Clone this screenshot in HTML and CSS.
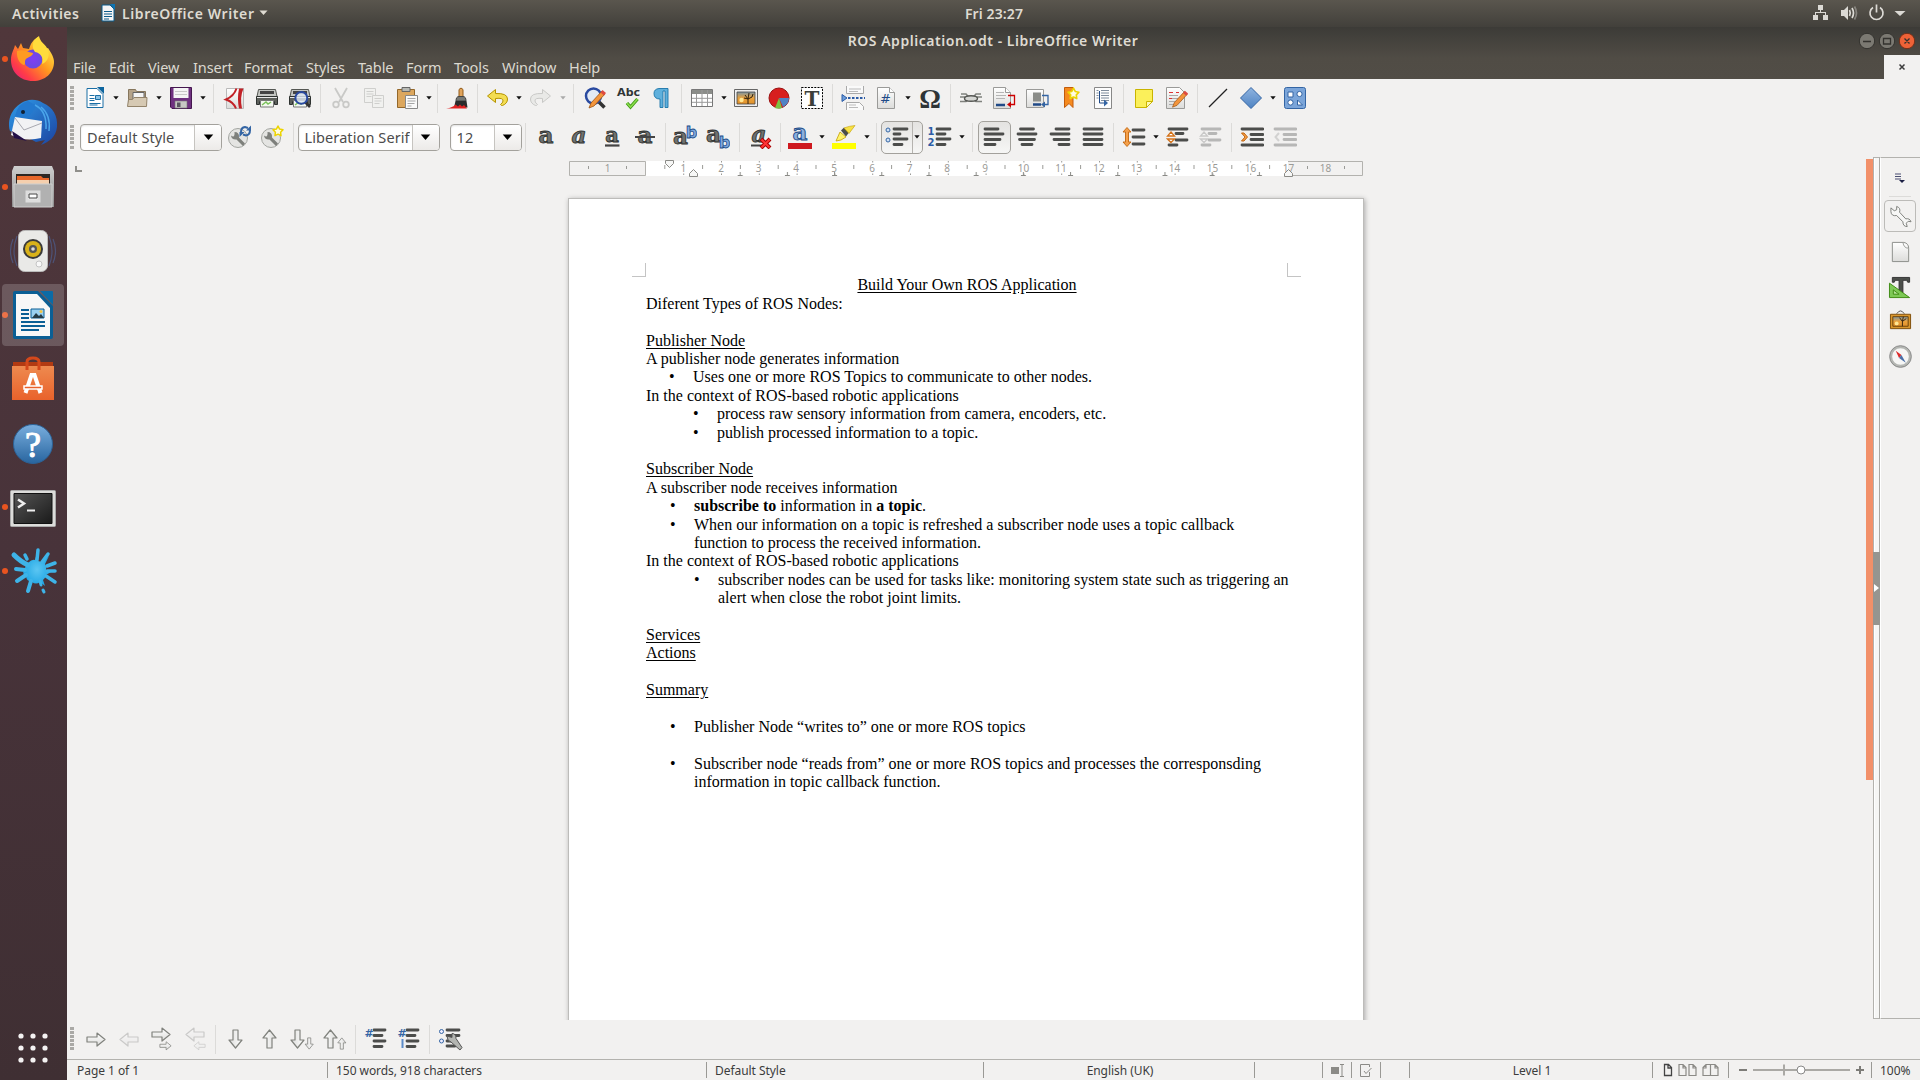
FILE: index.html
```html
<!DOCTYPE html>
<html lang="en">
<head>
<meta charset="utf-8">
<title>ROS Application.odt - LibreOffice Writer</title>
<link rel="stylesheet" href="styles.css">
</head>
<body>
<svg class="defs" width="0" height="0">
<defs>
<linearGradient id="gw" x2="0" y2="1"><stop stop-color="#fff"/><stop offset="1" stop-color="#dcdcda"/></linearGradient>
<linearGradient id="gb" x2="0" y2="1"><stop stop-color="#8fb4e0"/><stop offset="1" stop-color="#4f83c2"/></linearGradient>
<linearGradient id="gsun" x2="0" y2="1"><stop stop-color="#7d96a4"/><stop offset=".5" stop-color="#e9a13c"/><stop offset="1" stop-color="#e0912a"/></linearGradient>
<linearGradient id="gff" x1="1" y1="0" x2="0" y2="1"><stop offset=".1" stop-color="#fff04a"/><stop offset=".45" stop-color="#ff9a1f"/><stop offset=".75" stop-color="#ff3d47"/><stop offset="1" stop-color="#e21587"/></linearGradient>
<radialGradient id="gpur"><stop stop-color="#7f3df5"/><stop offset="1" stop-color="#6a4be0"/></radialGradient>
<linearGradient id="gtb" x2="1" y2="1"><stop stop-color="#2f9be8"/><stop offset="1" stop-color="#1c43a0"/></linearGradient>
<linearGradient id="gfile" x2="0" y2="1"><stop stop-color="#cfcfcf"/><stop offset="1" stop-color="#8e8e8e"/></linearGradient>
<linearGradient id="gor" x2="0" y2="1"><stop stop-color="#ee8a4f"/><stop offset="1" stop-color="#e9622b"/></linearGradient>
<linearGradient id="ghelp" x2="0" y2="1"><stop stop-color="#79aede"/><stop offset="1" stop-color="#28659f"/></linearGradient>
<linearGradient id="gterm" x2="1" y2="1"><stop stop-color="#555"/><stop offset="1" stop-color="#1a1a1a"/></linearGradient>
<radialGradient id="gsp"><stop stop-color="#5cc6f2"/><stop offset="1" stop-color="#1fa6e4"/></radialGradient>

<symbol id="caret" viewBox="0 0 6 4"><path d="M.3.3h5.4L3 3.4z" fill="currentColor"/></symbol>
<symbol id="new" viewBox="0 0 24 24"><path d="M4 2.500h10l6 6V21.500H4z" fill="#fff" stroke="#1a6ea5"/><path d="M14 1h7v7z" fill="#0d659f"/><path d="M6.500 9.500h5M6.500 12.500h5M6.500 14.500h5M6.500 17.500h11M6.500 19h8" stroke="#1a6ea5"/><path d="M12.500 9.500h5v4h-5z" fill="#8fc4e6" stroke="#1a6ea5"/></symbol>
<symbol id="open" viewBox="0 0 24 24"><path d="M2.500 20V3.500h7l1 2h9V20z" fill="#b5a389" stroke="#86765d"/><path d="M7 6.500h11v7H7z" fill="#f5f5f5" stroke="#666"/><path d="M1.500 20.500l1-7h4l1.500-2h13l-.5 9z" fill="#d6c9b3" stroke="#93836a"/></symbol>
<symbol id="save" viewBox="0 0 24 24"><path d="M1.500 1.500h21v21H3l-1.500-1.500z" fill="#6f3180" stroke="#45174f"/><path d="M4.500 2h15v10h-15z" fill="#f5f5f5"/><path d="M6 5.500h12M6 8.500h12" stroke="#c9c9c9"/><path d="M6 15h12v7H6z" fill="#c8c8c4" stroke="#777" stroke-width=".6"/><path d="M8 16.500h3.500v4.500H8z" fill="#5a5560"/></symbol>
<symbol id="pdf" viewBox="0 0 24 24"><path d="M4.500 2.500h17v20h-17z" fill="url(#gw)" stroke="#b9b9b9"/><path d="M17 2.500h4.500q-4 9-1.500 20h-3q-2-10 0-20z" fill="#c22126"/><path d="M14.500 2.500Q12 10 4 13.500Q11.500 16 14 22.500" stroke="#c22126" stroke-width="2" fill="none"/></symbol>
<symbol id="print" viewBox="0 0 24 24"><path d="M3.500 3.500h17l1.500 7H2z" fill="#c4c6c2" stroke="#555753"/><path d="M5 5h14v3H5z" fill="#444"/><path d="M1.500 10.500h21v8h-3v-3h-15v3h-3z" fill="#5d605b" stroke="#2e3230"/><path d="M2 11.500h20" stroke="#e8e8e8"/><path d="M5.500 14.500h13v6.500h-13z" fill="#f4f8f0" stroke="#777"/><path d="M7 19l4-3 2 2 3-2" stroke="#7ac15a" stroke-width="1.500" fill="none"/></symbol>
<symbol id="lens" viewBox="0 0 24 24"><path d="M15 15l6.500 6.500" stroke="#333" stroke-width="3.500"/><circle cx="10.500" cy="10" r="7.500" fill="#dfe9f5" fill-opacity=".8" stroke="#2a4aa0" stroke-width="2.500"/></symbol>
<symbol id="cut" viewBox="0 0 24 24"><g fill="none" stroke="#c9c9c7" stroke-width="1.800"><path d="M6 2l8 14M18 2l-8 14"/><circle cx="7" cy="18.500" r="2.800"/><circle cx="17" cy="18.500" r="2.800"/></g></symbol>
<symbol id="copy" viewBox="0 0 24 24"><g fill="#f1f1ef" stroke="#cfcfcd"><path d="M2.500 2.500h11v14h-11z"/><path d="M10.500 9.500h11v12h-11z"/><path d="M4.500 5.500h7M4.500 8h7M4.500 10.500h5M12.500 12.500h7M12.500 15h7M12.500 17.500h5"/></g></symbol>
<symbol id="paste" viewBox="0 0 24 24"><path d="M2.500 3.500h17v18h-17z" fill="#dca75e" stroke="#93672a"/><path d="M7 1.500h8v4H7z" fill="#b7b9b4" stroke="#666"/><path d="M10.500 9.500h12v13h-12z" fill="#fafafa" stroke="#888"/><path d="M12.500 12.500h8M12.500 15h8M12.500 17.500h7M12.500 20h4" stroke="#a5a5a5"/></symbol>
<symbol id="brush" viewBox="0 0 24 24"><path d="M13 11V3.500q2-3 4 0V11z" fill="#e0a35a" stroke="#935d1c"/><path d="M10 15q0-4.500 3-4.500h4q3 0 3 4.500z" fill="#777975" stroke="#444"/><path d="M9.500 15h11l1 6.500H8z" fill="#2b2b2b"/><path d="M0 22.500q7-1 9.500-4l2.500 2 2-2 2 2 2-1.500 3 3.500z" fill="#df2222"/></symbol>
<symbol id="undo" viewBox="0 0 24 24"><path d="M9.500 3.500L1.500 10l8 6.500v-4q8-1 7.500 2.500-.3 2-2.500 3.500 1 1.500 2 1 5-2 5-6.500 0-6-12-5.500z" fill="currentColor" stroke="var(--edge)" stroke-linejoin="round"/></symbol>
<symbol id="pencil" viewBox="0 0 24 24"><path d="M6 22l2-5L19 5l3 3-11 12z" fill="#f3953c" stroke="#9d5415" stroke-width=".8"/><path d="M17.500 6.500l2-2.500 3.500 3-2 2.500z" fill="#dd4a42"/></symbol>
<symbol id="abc" viewBox="0 0 24 24"><text x="1" y="9.500" class="g-abc" textLength="23" lengthAdjust="spacingAndGlyphs">Abc</text><path d="M11 17l3.500 4 7-8" fill="none" stroke="#3f9b15" stroke-width="3.400"/><path d="M11 17l3.500 4 7-8" fill="none" stroke="#8bdd4c" stroke-width="1.500"/></symbol>
<symbol id="pil" viewBox="0 0 24 24"><path d="M10 2.500h9v19h-3V5h-2v16.500h-3V13Q5 13 5 7.500 5 3 10 2.500z" fill="#5fb0dc" stroke="#1b75a8" stroke-width=".9"/></symbol>
<symbol id="table" viewBox="0 0 24 24"><path d="M1.500 3.500h21v17h-21z" fill="#fff" stroke="#777"/><path d="M2 4h20v4H2z" fill="#8b8d89"/><path d="M2 12.300h20M2 16.300h20M6.500 8v12M12 4v16M17.500 4v16" stroke="#999"/></symbol>
<symbol id="image" viewBox="0 0 24 24"><path d="M.5 3.500h23v17H.5z" fill="#eee" stroke="#666"/><path d="M3 6h18v12H3z" fill="url(#gsun)" stroke="#444" stroke-width=".8"/><circle cx="7.500" cy="14" r="2.200" fill="#ffe793"/><path d="M14 18v-5l-3-4M14 13l1-6M14 13l4-2 1-3M14 13l-4-1" stroke="#33230f" fill="none"/></symbol>
<symbol id="chart" viewBox="0 0 24 24"><circle cx="12" cy="12" r="10" fill="#d71e1e" stroke="#9a1010"/><path d="M12 12h10a10 10 0 0 1-6 9z" fill="#4f82c4"/><path d="M12 12l3 10q-4 1-7 0z" fill="#7cc142"/></symbol>
<symbol id="tbox" viewBox="0 0 24 24"><path d="M1.500 1.500h21v21h-21z" fill="#fff" stroke="#000" stroke-dasharray="2 1.200"/><text x="12" y="19.500" class="g-t">T</text></symbol>
<symbol id="pbreak" viewBox="0 0 24 24"><path d="M5.500 0v7.500h17V0M5.500 24v-7.500h13l4 4V24" fill="#fafafa" stroke="#a9a9a9"/><path d="M8 3h12M8 5.500h9M8 19h7M8 21.500h9" stroke="#bbb"/><path d="M7 12h17" stroke="#2c5ca6" stroke-width="2" stroke-dasharray="2.500 1.500"/><path d="M1 8.500l5 3.500-5 3.500z" fill="#6b9cda" stroke="#2c5ca6"/></symbol>
<symbol id="field" viewBox="0 0 24 24"><path d="M3.500 1.500h12l5 5v16h-17z" fill="url(#gw)" stroke="#9a9a98"/><path d="M15.500 1.500v5h5" fill="#fff" stroke="#9a9a98"/><text x="11.500" y="17" class="g-hash">#</text></symbol>
<symbol id="omega" viewBox="0 0 24 24"><text x="12" y="22" class="g-om">Ω</text></symbol>
<symbol id="link" viewBox="0 0 24 24"><g fill="none" stroke="#80827e" stroke-width="1.700"><path d="M2 8h5l3 3.500M1 11h5M1 15.500h6l3-3M22 8h-5l-3 3.500M23 11h-5M23 15.500h-6l-3-3"/></g><ellipse cx="12" cy="12.500" rx="6.500" ry="2.800" fill="#d5d6d3" stroke="#555753" stroke-width="1.400"/></symbol>
<symbol id="fnote" viewBox="0 0 24 24"><path d="M1.500 1.500h12l5 5v16h-17z" fill="url(#gw)" stroke="#9a9a98"/><path d="M13.500 1.500v5h5" fill="#fff" stroke="#9a9a98"/><path d="M4 6.500h8M4 9.500h10M4 12.500h9" stroke="#b5b5b5"/><path d="M4 19h9" stroke="#204a87" stroke-width="2.500"/><path d="M16 9.500h6.500v9H18" fill="none" stroke="#c00" stroke-width="1.300"/><path d="M19 15.500v6l-4-3z" fill="#c00"/></symbol>
<symbol id="enote" viewBox="0 0 24 24"><path d="M1.500 3.500h17v18h-17z" fill="url(#gw)" stroke="#9a9a98"/><path d="M8 6.500h8v9H8z" fill="#8b8d89"/><path d="M8 18.500h8" stroke="#204a87" stroke-width="2.500"/><path d="M17 9.500h6v9h-4" fill="none" stroke="#3465a4" stroke-width="1.300"/><path d="M20 15.500v6l-4-3z" fill="#3465a4"/></symbol>
<symbol id="star" viewBox="0 0 12 12"><path d="M6 1l1.600 3.100 3.400.7-2.400 2.500.4 3.400-3-1.500-3 1.500.4-3.400L1 4.800l3.400-.7z" fill="#fffce0" stroke="#edd400" stroke-width="1.500" stroke-linejoin="round"/></symbol>
<symbol id="bm" viewBox="0 0 24 24"><path d="M5.500 1.500h8.500v20l-4-4-4.500 4z" fill="#f58a1f" stroke="#c25b0b"/><use href="#star" x="8" y="1" width="13" height="13"/></symbol>
<symbol id="xref" viewBox="0 0 24 24"><path d="M3.500 1.500h17v21h-17z" fill="#fdfdfd" stroke="#888"/><path d="M5.500 4.500h2M5.500 7h2M5.500 9.500h2M5.500 12h2M10 4.500h8M10 7h8M10 9.500h8M10 12h8M10 14.500h8" stroke="#7f8c9c"/><path d="M8.500 5v12h6" stroke="#204a87" fill="none"/><path d="M13 13.500l4 3.500-4 3.500z" fill="#3465a4"/></symbol>
<symbol id="note" viewBox="0 0 24 24"><path d="M3.500 3.500h17v12l-6 6h-11z" fill="#fbf05a" stroke="#c9b400"/><path d="M20.500 15.500h-6v6z" fill="#fdf9b4" stroke="#c9b400"/></symbol>
<symbol id="track" viewBox="0 0 24 24"><path d="M1.500 1.500h13l5 5v16h-18z" fill="url(#gw)" stroke="#9a9a98"/><path d="M4 9.500h9M4 12.500h9M4 15.500h6M4 18.500h5" stroke="#aaa"/><path d="M4 6.500h4m3 0h3M4 12.500h3" stroke="#d33"/><use href="#pencil" x="2" y="1" width="22" height="22"/></symbol>
<symbol id="line" viewBox="0 0 24 24"><path d="M3 21L21 3" stroke="#222" stroke-width="1.300"/></symbol>
<symbol id="dia" viewBox="0 0 24 24"><path d="M12 1.500L22.500 12 12 22.500 1.500 12z" fill="url(#gb)" stroke="#3465a4"/></symbol>
<symbol id="shapes" viewBox="0 0 24 24"><rect x="1.500" y="1.500" width="21" height="21" rx="2" fill="#7ba5d9" stroke="#3465a4"/><g fill="#fff" stroke="#3465a4"><path d="M5 6h5v5H5zM14.500 14v5h5z"/><circle cx="16.500" cy="8" r="2.600"/><circle cx="7.500" cy="16.500" r="2.600"/></g></symbol>
<symbol id="wrenchc" viewBox="0 0 24 24"><circle cx="11" cy="13" r="9.500" fill="#e4e4e2" stroke="#a3a5a1"/><path d="M4 10.500q4 3 3.500-3.500 5 0 4.500 5.500l6 6-2 2.500-6.500-6.500q-5 .5-5.500-4z" fill="#7e807c"/></symbol>
<symbol id="ustyle" viewBox="0 0 24 24"><use href="#wrenchc" width="24" height="24"/><path d="M14 7q0-4.500 4-5l3 1M23 5q0 5-4 5.500l-3-1" fill="none" stroke="#3465a4" stroke-width="2"/><path d="M19 5.500h5V.5zM17.500 7h-5v5z" fill="#3465a4"/></symbol>
<symbol id="nstyle" viewBox="0 0 24 24"><use href="#wrenchc" width="24" height="24"/><use href="#star" x="12" y="0" width="12" height="12"/></symbol>
<symbol id="ab" viewBox="0 0 24 24"><text x="12" y="18" class="g-a">a</text></symbol>
<symbol id="ai" viewBox="0 0 24 24"><text x="12" y="18" class="g-a it">a</text></symbol>
<symbol id="au" viewBox="0 0 24 24"><text x="12" y="17" class="g-a sm">a</text><path d="M5 20.500h14.500" stroke="#444" stroke-width="2.200"/></symbol>
<symbol id="as" viewBox="0 0 24 24"><text x="12" y="18" class="g-a">a</text><path d="M2 12h20" stroke="#444" stroke-width="2"/></symbol>
<symbol id="sup" viewBox="0 0 24 24"><text x="7.500" y="18.500" class="g-a">a</text><text x="18.500" y="13" class="g-b">b</text></symbol>
<symbol id="sub" viewBox="0 0 24 24"><text x="7.500" y="17" class="g-a">a</text><text x="18.500" y="22.500" class="g-b">b</text></symbol>
<symbol id="clr" viewBox="0 0 24 24"><text x="11" y="17" class="g-a it">a</text><path d="M3 20.500h12" stroke="#444" stroke-width="2"/><path d="M13 14l9 9M22 14l-9 9" stroke="#a00" stroke-width="4"/><path d="M13.500 14.500l8 8M21.500 14.500l-8 8" stroke="#f33" stroke-width="2"/></symbol>
<symbol id="fcol" viewBox="0 0 24 24"><text x="12" y="15" class="g-a bl">a</text><path d="M0 18h24v6H0z" fill="#ce181e"/></symbol>
<symbol id="hi" viewBox="0 0 24 24"><path d="M4 16l4-9 6 5-5 3z" fill="#fff36b" stroke="#c4a000" stroke-width=".8"/><path d="M9 5.500l3-3 5 5-3 4z" fill="#4a4c48"/><path d="M12 3Q17 1 23 .500l-6 8z" fill="#f7e145" stroke="#c4a000" stroke-width=".6"/><path d="M0 18h24v6H0z" fill="#ff0"/></symbol>
<symbol id="al" viewBox="0 0 24 24"><path d="M3 4h13M3 9h18M3 14.500h15M3 19.500h10" class="tl"/></symbol>
<symbol id="ac" viewBox="0 0 24 24"><path d="M5.500 4h13M3 9h18M4.500 14.500h15M7 19.500h10" class="tl"/></symbol>
<symbol id="ar" viewBox="0 0 24 24"><path d="M8 4h13M3 9h18M6 14.500h15M11 19.500h10" class="tl"/></symbol>
<symbol id="aj" viewBox="0 0 24 24"><path d="M3 4h18M3 9h18M3 14.500h18M3 19.500h18" class="tl"/></symbol>
<symbol id="bul" viewBox="0 0 24 24"><path d="M9 4h13M9 9h6M9 14h13M9 19.500h8" class="tl"/><circle cx="3" cy="5" r="2" fill="#cfe0f4" stroke="#3465a4"/><circle cx="3" cy="15" r="2" fill="#cfe0f4" stroke="#3465a4"/></symbol>
<symbol id="num" viewBox="0 0 24 24"><path d="M9 4h13M9 9h8M9 14h13M9 19.500h8" class="tl"/><text x="3" y="10" class="g-n">1</text><text x="3" y="21" class="g-n">2</text></symbol>
<symbol id="lsp" viewBox="0 0 24 24"><path d="M11 5h11M11 12h11M11 19h11" class="tl"/><path d="M5 2.500l4 4.500H6.500v10H9L5 21.500 1 17h2.500V7H1z" fill="#f5a04a" stroke="#c2650f" stroke-width=".9"/></symbol>
<symbol id="psp" viewBox="0 0 24 24"><path d="M3 4h18M10 8.500h7M10 15h11M3 20h8" class="tl"/><path d="M5 7l3.500 4h-7zM5 17.500L8.500 14h-7z" fill="#fff" stroke="#d3721a" stroke-width="1.300"/></symbol>
<symbol id="ind" viewBox="0 0 24 24"><path d="M2 4h21M11 9.500h12M11 14.500h12M2 20h21" class="tl"/><path d="M1.500 8l3.500 4-3.500 4h2.500l3.500-4L4 8z" fill="#f5a04a" stroke="#c2650f"/></symbol>
<symbol id="outd" viewBox="0 0 24 24"><path d="M2 4h21M11 9.500h12M11 14.500h12M2 20h21" class="tl"/><path d="M6 8l-3.500 4L6 16" fill="none" stroke="#999" stroke-width="2"/></symbol>

<symbol id="r" viewBox="0 0 24 24"><path d="M3 10h10V6l8 6.500-8 6.500v-4H3z" fill="url(#gw)" stroke="#80827d" stroke-width="1.200" stroke-linejoin="round"/></symbol>
<symbol id="wrench" viewBox="0 0 24 24"><path d="M2 3l3.500 3L8 5V1.500q4.500 1.500 3 6l6.500 7q4-1 5.500 3l-3-.5-2 2 1 3.500q-4.500 0-4.500-5L8 11q-5.500 1-6-4z" fill="#f7f7f6" stroke="#7c7e7a"/></symbol>
<symbol id="nb" viewBox="0 0 24 24"><path d="M10 3h11M10 8.500h8M10 14h11M10 19.500h8" class="tl"/><text x="5" y="10" class="g-h2">#</text></symbol>
<symbol id="nb2" viewBox="0 0 24 24"><path d="M10 3h11M10 8.500h8M10 14h11M10 19.500h8" class="tl"/><text x="5" y="10" class="g-h2">#</text><path d="M5.500 12v9" stroke="#5b8bc8" stroke-width="2"/></symbol>
<symbol id="bw" viewBox="0 0 24 24"><path d="M8 3h12M8 8.500h12M8 14h8M8 19h8" class="tl"/><circle cx="2.500" cy="4.500" r="2" fill="#eef" stroke="#3465a4"/><circle cx="2.500" cy="14" r="2" fill="#eef" stroke="#3465a4"/><path d="M8 9q0 5 4 6l9 8 2-2.500-6-9q0-5-4-5v4z" fill="#b4b6b2" stroke="#555"/></symbol>
</defs></svg>

<header class="topbar">
  <span class="act">Activities</span>
  <svg class="appicon" viewBox="0 0 14 18"><path d="M1 1h8l4 4v12H1z" fill="#f5f5f5" stroke="#0b5c8c"/><path d="M9 0h5v6z" fill="#0d75b3"/><path d="M3 7.500h8M3 10h8M3 12.500h8M3 15h5" stroke="#0b5c8c" stroke-width="1.200"/></svg>
  <span class="appname">LibreOffice Writer</span>
  <svg class="tcaret" viewBox="0 0 6 4"><use href="#caret"/></svg>
  <span class="clock">Fri 23:27</span>
  <svg class="tray" viewBox="0 0 92 20"><g fill="#dcdad5"><path d="M8 2h5v5H8zM3 12h5v5H3zM13 12h5v5h-5z"/><path d="M10 6h1v3h5v3h-1v-2H6v2H5V9h5z"/><path d="M31 7h3l4-4v14l-4-4h-3z"/></g><g fill="none" stroke="#dcdad5" stroke-width="1.700"><path d="M39.500 7q1.500 3 0 6M42 5q3 5 0 10"/><path d="M44.500 3.500q4 6.500 0 13" opacity=".4"/><path d="M63 4.500a6.500 6.500 0 1 0 7 0M66.500 1.500v8"/></g><path d="M84.500 8h11l-5.500 5z" fill="#dcdad5"/></svg>
</header>

<div class="desktop">
<nav class="dock">
  <div class="app run"><svg viewBox="0 0 48 48"><path d="M24 46C11 46 2 37 2 25c0-7 3-10 4-15l3 4 3-6 2 5 6 1c2-6 4-9 9-12 1 7 5 7 7 12l3-1c4 6 6 10 6 14 0 11-9 19-21 19z" fill="url(#gff)"/><circle cx="24" cy="24" r="9.500" fill="url(#gpur)"/><path d="M8 16c6-2 10 1 16 2 0 3-5 4-7 6s0 6-2 6-8-5-7-14z" fill="#ff9b22"/><path d="M30 1c-8 5-7 12-4 16 6 1 9 6 7 12 6-2 9-10 5-16-2-4-7-6-8-12z" fill="#ffdc3c"/></svg></div>
  <div class="app"><svg viewBox="0 0 48 48"><path d="M1 32C-3 18 6 4 20 1q8-1 14 3c10 4 15 13 14 24-1 10-8 15-16 18l4-5-9 2-13-7z" fill="url(#gtb)"/><path d="M6 17Q9 4 19 2l9 5-11 14z" fill="#2379cf"/><path d="M26 6q12 6 11 24M32 8q10 8 8 24" stroke="#4aa5ea" fill="none" stroke-width="1.500"/><path d="M2 36l4-18 27 4-1 17q-16 4-30-3z" fill="#f2f2f4"/><path d="M6 19l9 12 18-7" fill="none" stroke="#a8a8b0"/><path d="M3 32l15 10-13-3z" fill="#241047"/><circle cx="14" cy="13" r="2" fill="#123"/></svg></div>
  <div class="app run"><svg viewBox="0 0 48 48"><path d="M5 3h38l2 5v36H3V8z" fill="url(#gfile)"/><path d="M7 11h34v12H7z" fill="#2e2622"/><path d="M8 13h24l2 2h6v6H8z" fill="#e8672a"/><path d="M8 17h32v4H8z" fill="#f4cfae"/><path d="M5 21h38v23H5z" fill="#b1b1b1" stroke="#cfcfcf"/><path d="M18 29h12v9H18z" fill="#eee" stroke="#ddd" stroke-width="3"/><path d="M20 31h8v4h-8z" fill="#fff" stroke="#444"/></svg></div>
  <div class="app"><svg viewBox="0 0 48 48"><g fill="none" stroke="#4d5a86" stroke-width="1.200" opacity=".8"><path d="M4 12q-5 12 0 24M8 9q-6 15 0 30M44 12q5 12 0 24M40 9q6 15 0 30"/></g><rect x="9.500" y="3.500" width="29" height="41" rx="6" fill="#e9e9e7" stroke="#bbb"/><circle cx="24" cy="22" r="10" fill="#3a3a3a"/><circle cx="24" cy="22" r="8" fill="#d9b21a"/><circle cx="24" cy="22" r="4" fill="#555"/><circle cx="24" cy="22" r="1.800" fill="#ddd"/><circle cx="30" cy="37" r="3" fill="#f8f8f8" stroke="#c4c4c4"/></svg></div>
  <div class="app run on"><svg viewBox="0 0 48 48"><path d="M4 2q0-2 2-2h23l15 15v31q0 2-2 2H6q-2 0-2-2z" fill="#0a5f95"/><path d="M7 3h21l13 14v28H7z" fill="#f7f7f7"/><path d="M31 0h12q1 0 1 1v13z" fill="#0b6ba6"/><path d="M12 19h8M12 23h8M12 27h8M12 31h24M12 35h24M12 39h18" stroke="#0a5f95" stroke-width="2"/><path d="M22 18h13v9H22z" fill="#9ad0f0" stroke="#0a5f95"/><path d="M23 27l4-5 3 3 2-2 3 4z" fill="#253b46"/><circle cx="32" cy="20.500" r="1.500" fill="#f5c542"/></svg></div>
  <div class="app"><svg viewBox="0 0 48 48"><path d="M4 7h40v8H4z" fill="#b23a12"/><path d="M3 11h42v34H3z" fill="url(#gor)"/><path d="M18 15V7q0-4 6-4t6 4v8" fill="none" stroke="#d4481b" stroke-width="3"/><path d="M16.500 38l6-18h3l6 18" fill="none" stroke="#fff" stroke-width="4"/><path d="M15 31h18v3H15z" fill="#e9622b" stroke="#fff" stroke-width="1.500"/></svg></div>
  <div class="app"><svg viewBox="0 0 48 48"><circle cx="24" cy="25" r="19.500" fill="url(#ghelp)" stroke="#2c6296"/><text x="24" y="38" class="g-q">?</text></svg></div>
  <div class="app run"><svg viewBox="0 0 48 48"><rect x="1.500" y="7.500" width="45" height="36" rx="1" fill="#dcdcda" stroke="#aaa"/><path d="M5 10.500h38v30H5z" fill="url(#gterm)" stroke="#111"/><path d="M9 16.500l6 4-6 4" fill="none" stroke="#eee" stroke-width="2.500"/><path d="M18 27.500h8" stroke="#eee" stroke-width="2"/></svg></div>
  <div class="app run"><svg viewBox="0 0 48 48"><path d="M19 16q4-4 7-3l2-7 1 8 4 1 7-6-4 8q2 3 1 6l5 2-5 3q-1 4-3 5l2 6-5-4q-4 3-8 0-6-1-6-6l-3-3 2-4q0-4 3-6z" fill="url(#gsp)"/><g stroke="#3eb4e8" stroke-linecap="round" fill="none"><path d="M19 18Q12 15 5 8" stroke-width="5"/><path d="M28 13l1-10M33 15l6-8M38 19l8-3M38 24h8M37 29l9 6M18 12l-2-4" stroke-width="3.500"/><path d="M22 34l-3 10M17 28l-9 6M16 23l-9-1" stroke-width="4"/><path d="M31 34l1 4M34 43l1 2" stroke-width="3"/></g></svg></div>
  <svg class="grid9" viewBox="0 0 32 32"><g fill="#f4f2f2"><circle cx="4" cy="4" r="2.600"/><circle cx="16" cy="4" r="2.600"/><circle cx="28" cy="4" r="2.600"/><circle cx="4" cy="16" r="2.600"/><circle cx="16" cy="16" r="2.600"/><circle cx="28" cy="16" r="2.600"/><circle cx="4" cy="28" r="2.600"/><circle cx="16" cy="28" r="2.600"/><circle cx="28" cy="28" r="2.600"/></g></svg>
</nav>

<main class="window">
  <div class="head">
    <div class="titlebar"><span class="title">ROS Application.odt - LibreOffice Writer</span>
      <svg class="wbtns" viewBox="0 0 60 20"><circle cx="10" cy="10" r="7.700" fill="#7b7972" stroke="#33322e"/><circle cx="30" cy="10" r="7.700" fill="#7b7972" stroke="#33322e"/><circle cx="50" cy="10" r="7.700" fill="#ee6237" stroke="#6f2f19"/><path d="M6 10.500h8M26.500 7.500h7v5.500h-7zM47.500 7.500l5 5M52.500 7.500l-5 5" stroke="#33322e" fill="none" stroke-width="1.300"/></svg>
    </div>
    <div class="menubar">
      <div class="menus"><span>File</span><span>Edit</span><span>View</span><span>Insert</span><span>Format</span><span>Styles</span><span>Table</span><span>Form</span><span>Tools</span><span>Window</span><span>Help</span></div>
      <div class="closedoc"><svg width="8" height="8" viewBox="0 0 8 8"><path d="M1.500 1.500l5 5M6.500 1.500l-5 5" stroke="#3c3c3c" stroke-width="1.500"/></svg></div>
    </div>
  </div>

  <div class="tools t1">
    <i class="grip"></i>
    <b><svg><use href="#new"/></svg></b><u class="w10"><svg><use href="#caret"/></svg></u>
    <b><svg><use href="#open"/></svg></b><u class="w10"><svg><use href="#caret"/></svg></u>
    <b><svg><use href="#save"/></svg></b><u class="w12"><svg><use href="#caret"/></svg></u><s class="w8"></s>
    <b><svg><use href="#pdf"/></svg></b><b><svg><use href="#print"/></svg></b><b><svg viewBox="0 0 24 24"><use href="#print"/><use href="#lens" x="5" y="4" width="19" height="19"/></svg></b><s class="w8"></s>
    <b><svg><use href="#cut"/></svg></b><b><svg><use href="#copy"/></svg></b><b><svg><use href="#paste"/></svg></b><u class="w11"><svg><use href="#caret"/></svg></u><s class="w7"></s>
    <b><svg><use href="#brush"/></svg></b><s class="w7"></s>
    <b class="y"><svg><use href="#undo"/></svg></b><u class="w10"><svg><use href="#caret"/></svg></u>
    <b class="redo"><svg><use href="#undo"/></svg></b><u class="w11 off"><svg><use href="#caret"/></svg></u><s class="w10"></s>
    <b><svg viewBox="0 0 24 24"><use href="#lens"/><use href="#pencil"/></svg></b><b><svg><use href="#abc"/></svg></b><b><svg><use href="#pil"/></svg></b><s class="w8"></s>
    <b><svg><use href="#table"/></svg></b><u class="w11"><svg><use href="#caret"/></svg></u>
    <b><svg><use href="#image"/></svg></b><b><svg><use href="#chart"/></svg></b><b><svg><use href="#tbox"/></svg></b><s class="w8"></s>
    <b><svg><use href="#pbreak"/></svg></b><b><svg><use href="#field"/></svg></b><u class="w11"><svg><use href="#caret"/></svg></u>
    <b><svg><use href="#omega"/></svg></b><s class="w8"></s>
    <b><svg><use href="#link"/></svg></b><b><svg><use href="#fnote"/></svg></b><b><svg><use href="#enote"/></svg></b><b><svg class="nudge"><use href="#bm"/></svg></b><b><svg><use href="#xref"/></svg></b><s class="w8"></s>
    <b><svg><use href="#note"/></svg></b><b><svg><use href="#track"/></svg></b><s class="w8"></s>
    <b><svg><use href="#line"/></svg></b><b><svg><use href="#dia"/></svg></b><u class="w11"><svg><use href="#caret"/></svg></u>
    <b><svg><use href="#shapes"/></svg></b>
  </div>

  <div class="tools t2">
    <i class="grip"></i>
    <div class="combo c1"><span>Default Style</span><em><svg><use href="#caret"/></svg></em></div>
    <b><svg><use href="#ustyle"/></svg></b><b><svg><use href="#nstyle"/></svg></b><s class="w9"></s>
    <div class="combo c2"><span>Liberation Serif</span><em><svg><use href="#caret"/></svg></em></div>
    <div class="combo c3"><span>12</span><em><svg><use href="#caret"/></svg></em></div><s class="w8"></s>
    <b><svg><use href="#ab"/></svg></b><b><svg><use href="#ai"/></svg></b><b><svg><use href="#au"/></svg></b><b><svg><use href="#as"/></svg></b><s class="w7"></s>
    <b><svg><use href="#sup"/></svg></b><b><svg><use href="#sub"/></svg></b><s class="w9"></s>
    <b><svg><use href="#clr"/></svg></b><s class="w7"></s>
    <b><svg><use href="#fcol"/></svg></b><u class="w11"><svg><use href="#caret"/></svg></u>
    <b><svg><use href="#hi"/></svg></b><u class="w12"><svg><use href="#caret"/></svg></u><s class="w8"></s>
    <div class="split"><b><svg><use href="#bul"/></svg></b><u><svg><use href="#caret"/></svg></u></div>
    <b class="numb"><svg><use href="#num"/></svg></b><u class="w11"><svg><use href="#caret"/></svg></u><s class="w10"></s>
    <b class="press"><svg><use href="#al"/></svg></b><b><svg><use href="#ac"/></svg></b><b><svg><use href="#ar"/></svg></b><b><svg><use href="#aj"/></svg></b><s class="w8"></s>
    <b><svg><use href="#lsp"/></svg></b><u class="w11"><svg><use href="#caret"/></svg></u>
    <b><svg><use href="#psp"/></svg></b><b class="dis"><svg><use href="#psp"/></svg></b><s class="w8"></s>
    <b><svg><use href="#ind"/></svg></b><b class="dis"><svg><use href="#outd"/></svg></b>
  </div>

  <div class="work">
    <div class="canvas">
      <i class="corner"></i>
      <svg class="ruler" viewBox="568 158 798 20" width="798" height="20">
        <defs><pattern id="tk" x="664.3" y="158" width="37.800" height="20" patternUnits="userSpaceOnUse"><path d="M.5 7v4" stroke="#9a9a96"/><path d="M19.400 3v1.500M19.400 15.500V17" stroke="#9a9a96"/></pattern>
        <pattern id="tb" x="737.700" y="158" width="47.200" height="20" patternUnits="userSpaceOnUse"><path d="M0 17.500h5M2.500 14v4" stroke="#8a8a86" fill="none"/></pattern></defs>
        <path d="M569.500 161.500h76v14h-76zM1288 161.500h74.500v14H1288" fill="#f2f1f0" stroke="#b3b2ae"/><path d="M646 161h642v15H646z" fill="#fff"/>
        <path d="M588.500 166v3M626.500 166v3M1307.500 166v3M1344.500 166v3" stroke="#9a9a96"/>
        <path d="M664 158h624v20H664z" fill="url(#tk)"/><path d="M737 158h541v20H737z" fill="url(#tb)"/>
        <g class="rl"><text x="607.700" y="171.500">1</text><text x="683.300" y="171.500">1</text><text x="721" y="171.500">2</text><text x="758.500" y="171.500">3</text><text x="796" y="171.500">4</text><text x="834" y="171.500">5</text><text x="872" y="171.500">6</text><text x="909.500" y="171.500">7</text><text x="947" y="171.500">8</text><text x="985" y="171.500">9</text><text x="1023.500" y="171.500">10</text><text x="1061" y="171.500">11</text><text x="1099" y="171.500">12</text><text x="1136.500" y="171.500">13</text><text x="1174.500" y="171.500">14</text><text x="1212.500" y="171.500">15</text><text x="1250.500" y="171.500">16</text><text x="1288.500" y="171.500">17</text><text x="1325.500" y="171.500">18</text></g>
        <g fill="#f7f7f6" stroke="#8a8a86"><path d="M665.500 160.500h8v3l-4 4-4-4z"/><path d="M689.500 176.500h8v-3l-4-4-4 4z"/><path d="M1284.500 176.500h8v-3l-4-4-4 4z"/></g>
      </svg>
      <article class="page">
        <div class="marks"><i></i><i></i></div>
        <div class="text">
          <p class="center"><ins>Build Your Own ROS Application</ins></p>
          <p>Diferent Types of ROS Nodes:</p><p class="blank"></p>
          <p><ins>Publisher Node</ins></p>
          <p>A publisher node generates information</p>
          <p class="li a">Uses one or more ROS Topics to communicate to other nodes.</p>
          <p>In the context of ROS-based robotic applications</p>
          <p class="li c">process raw sensory information from camera, encoders, etc.</p>
          <p class="li c">publish processed information to a topic.</p><p class="blank"></p>
          <p><ins>Subscriber Node</ins></p>
          <p>A subscriber node receives information</p>
          <p class="li"><strong>subscribe to</strong> information in <strong>a topic</strong>.</p>
          <p class="li">When our information on a topic is refreshed a subscriber node uses a topic callback<br>function to process the received information.</p>
          <p>In the context of ROS-based robotic applications</p>
          <p class="li d">subscriber nodes can be used for tasks like: monitoring system state such as triggering an<br>alert when close the robot joint limits.</p><p class="blank"></p>
          <p><ins>Services</ins></p><p><ins>Actions</ins></p><p class="blank"></p>
          <p><ins>Summary</ins></p><p class="blank"></p>
          <p class="li">Publisher Node “writes to” one or more ROS topics</p><p class="blank"></p>
          <p class="li">Subscriber node “reads from” one or more ROS topics and processes the corresponsding<br>information in topic callback function.</p>
        </div>
      </article>
    </div>
    <div class="scroll"><i></i></div>
    <div class="splitter"><i><svg width="5" height="8" viewBox="0 0 5 8"><path d="M0 0l5 4-5 4z" fill="#fff"/></svg></i></div>
    <aside class="side">
      <svg class="smenu" viewBox="0 0 10 10"><path d="M0 1h6M0 3.500h6M0 6h6" stroke="#4a4f72" stroke-width="1.200"/><path d="M4 7h6L7 10z" fill="#1c2044"/></svg>
      <i class="rule"></i>
      <div class="sb act1"><svg><use href="#wrench"/></svg></div>
      <div class="sb s2"><svg viewBox="0 0 24 24"><path d="M3.500 2.500h12q5 1 5 6v14h-17z" fill="url(#gw)" stroke="#8b8d89"/><path d="M14.500 2.500q1 6 5.500 6" fill="none" stroke="#999b97"/></svg></div>
      <div class="sb s3"><svg viewBox="0 0 24 24"><path d="M3.500 1.500h18v5h-2l-1-2h-4V18h-4V4.500h-4l-1 2h-2z" fill="#4c4f4b" stroke="#333"/><path d="M.5 7.500l21 15H.5z" fill="#7dc955" stroke="#3e8a12"/><path d="M4.500 14.500l6 4.500h-6z" fill="#b5e59a" stroke="#3e8a12"/></svg></div>
      <div class="sb s4"><svg viewBox="0 0 24 24"><path d="M8 5q4-6 8 0" fill="none" stroke="#555"/><path d="M1.500 5.500h21v15h-21z" fill="#d9962c" stroke="#7e4d08"/><path d="M4 8h16v10H4z" fill="url(#gsun)" stroke="#6b4208"/><path d="M14 18v-5l-3-4M14 13l1-5M14 13l4-3" stroke="#33230f" fill="none"/><circle cx="8" cy="15" r="2" fill="#ffe793"/></svg></div>
      <div class="sb s5"><svg viewBox="0 0 24 24"><circle cx="12" cy="12" r="10" fill="#f6f6f5" stroke="#b4b6b2" stroke-width="2.600"/><circle cx="12" cy="12" r="11.300" fill="none" stroke="#888"/><path d="M7 6l6 4.500-2.500 3z" fill="#dc2a2a"/><path d="M17.500 18.500l-7-5 2.500-3z" fill="#4b6fa8"/></svg></div>
    </aside>
  </div>

  <div class="tools t3">
    <i class="grip"></i>
    <b><svg><use href="#r"/></svg></b><b class="l dis"><svg><use href="#r"/></svg></b>
    <b><svg viewBox="0 0 24 24"><use href="#r" x="-1" y="-5" width="24" height="24"/><use href="#r" x="8" y="11" width="15" height="15"/></svg></b>
    <b class="l dis"><svg viewBox="0 0 24 24"><use href="#r" x="0" y="-5" width="24" height="24"/><use href="#r" x="0" y="11" width="15" height="15"/></svg></b><s class="w8"></s>
    <b class="d"><svg><use href="#r"/></svg></b><b class="up"><svg><use href="#r"/></svg></b>
    <b class="d"><svg viewBox="0 0 24 24"><use href="#r" y="4" width="24" height="24"/><use href="#r" x="9" y="-3" width="15" height="15"/></svg></b>
    <b class="up"><svg viewBox="0 0 24 24"><use href="#r" y="-5" width="24" height="24"/><use href="#r" x="0" y="11" width="15" height="15"/></svg></b><s class="w8"></s>
    <b><svg><use href="#nb"/></svg></b><b><svg><use href="#nb2"/></svg></b><s class="w9"></s>
    <b><svg><use href="#bw"/></svg></b>
  </div>

  <footer class="status">
    <span>Page 1 of 1</span><span>150 words, 918 characters</span><span>Default Style</span><span class="mid lang">English (UK)</span><span></span>
    <span class="mid"><svg width="13" height="13" viewBox="0 0 13 13"><path d="M0 3h8v7H0z" fill="#8b8a86"/><path d="M9 .5h4M11 .5v12M9 12.500h4" stroke="#8b8a86"/></svg></span>
    <span class="mid"><svg width="12" height="13" viewBox="0 0 12 13"><path d="M9.500 8v4.500h-9V.5h9V3M4 7l2 2.500L11.500 4" fill="none" stroke="#8b8a86"/></svg></span><span></span>
    <span class="mid lvl">Level 1</span>
    <span class="mid"><svg width="55" height="14" viewBox="0 0 55 14"><path d="M1.500 1.500h4l3 3v8h-7zM5 1.500V5h3.500" fill="none" stroke="#444" stroke-width="1.300"/><g fill="none" stroke="#8b8a86" stroke-width="1.200"><path d="M16 1.500h4l3 3v8h-7zM20 1.500V5h3M26 1.500h4l3 3v8h-7zM30 1.500V5h3"/><path d="M40 4.500l3-3h9l3 3v8H40zM47.500 1.500v11M43 1.500V5h-3M52 1.500V5h3"/></g></svg></span>
    <span class="mid"><svg width="130" height="14" viewBox="0 0 130 14"><path d="M4 7h8M121 7h8M125 3v8" stroke="#7d7c78" stroke-width="2"/><path d="M18 7h97M49 1.500v11" stroke="#aaa9a5" stroke-width="2"/><circle cx="66" cy="7" r="4" fill="#fff" stroke="#888"/></svg></span>
    <span>100%</span>
  </footer>
</main>
</div>
</body>
</html>
```
FILE: styles.css
```css
* { box-sizing: border-box; }
body { margin: 0; width: 1920px; height: 1080px; overflow: hidden; display: flex; flex-direction: column; background: #f2f1f0; font-family: "Noto Sans", "Open Sans", sans-serif; font-size: 14px; color: #3c3c3c; }
svg { display: block; flex: none; overflow: visible; }
.defs { position: absolute; }

.topbar { height: 27px; flex: none; display: flex; align-items: center; padding: 0 0 1px 12px; background: linear-gradient(#5a564e, #42403b); color: #dfdbd2; font-weight: 600; font-size: 14px; }
.act { width: 89px; letter-spacing: .5px; }
.appicon { width: 14px; height: 18px; margin-right: 7px; }
.appname { width: 137px; white-space: nowrap; letter-spacing: .6px; }
.tcaret { width: 9px; height: 6px; color: #dfdbd2; }
.clock { width: 80px; margin-left: 686px; text-align: center; letter-spacing: .1px; }
.tray { width: 92px; height: 20px; margin-left: 776px; }

.desktop { flex: 1; display: flex; min-height: 0; }
.dock { width: 67px; flex: none; display: flex; flex-direction: column; align-items: center; background: linear-gradient(#50373b, #48333a 50%, #3f2f33); padding-bottom: 16px; }
.app { width: 67px; height: 64px; display: flex; align-items: center; justify-content: center; position: relative; padding-right: 1px; }
.app > svg { width: 48px; height: 48px; }
.app.run::before { content: ""; position: absolute; left: 2px; top: 29px; width: 6px; height: 6px; border-radius: 3px; background: #e95420; }
.app.on::after { content: ""; position: absolute; left: 2px; top: 1px; width: 62px; height: 62px; border-radius: 4px; background: rgba(255,255,255,.18); }
.app.on > svg { z-index: 1; }
.grid9 { width: 32px; height: 32px; margin-top: auto; margin-right: 1px; }
.g-q { font: 36px "Liberation Serif", serif; fill: #fff; text-anchor: middle; stroke: #fff; }

.window { flex: 1; display: flex; flex-direction: column; min-width: 0; }
.head { height: 52px; flex: none; background: linear-gradient(#3c3b37, #504c45 60%, #514d46); color: #dfdbd2; }
.titlebar { height: 28px; display: flex; align-items: center; padding-bottom: 1px; }
.title { width: 400px; margin-left: 726px; text-align: center; font-weight: 600; font-size: 14px; letter-spacing: .54px; white-space: nowrap; }
.wbtns { width: 60px; height: 20px; margin-left: 664px; }
.menubar { height: 24px; display: flex; justify-content: space-between; }
.menus { display: grid; grid-template-columns: 36px 39px 45px 51px 62px 52px 48px 48px 48px 67px 40px; padding: 1px 0 0 6px; line-height: 23px; font-size: 14.5px; letter-spacing: -.1px; color: #dcd9d0; }
.closedoc { width: 36px; background: #f2f1f0; display: flex; align-items: center; justify-content: center; }

.tools { display: flex; align-items: center; flex: none; }
.tools b, .tools u, .tools s { display: flex; align-items: center; justify-content: center; flex: none; text-decoration: none; height: 33px; }
.tools b { width: 33px; }
.tools b > svg { width: 24px; height: 24px; }
.tools b > svg.nudge { margin-left: 3px; }
.tools u > svg { width: 6px; height: 4px; color: #111; }
.tools u.off > svg { color: #aaa; }
.tools s::before { content: ""; width: 1px; height: 29px; background: #dcdbd9; }
.grip { flex: none; width: 4px; height: 24px; background: repeating-linear-gradient(#aaa9a6 0 3px, transparent 3px 4.100px); }
.w7 { width: 7px; } .w8 { width: 8px; } .w9 { width: 9px; } .w10 { width: 10px; } .w11 { width: 11px; } .w12 { width: 12px; }
.t1 { height: 38px; padding-left: 3px; }
.t1 .grip { margin-right: 4px; }
.y { color: #f3dd52; --edge: #b59400; }
.redo { color: #e9e9e7; --edge: #c8c8c6; transform: scaleX(-1); }
.t2 { height: 40px; padding-left: 3px; }
.t2 .grip { margin-right: 6px; }
.t3 { height: 39px; padding: 0 0 1px 3px; }
.t3 .grip { margin-right: 5px; }
.combo { height: 27px; display: flex; flex: none; border: 1px solid #a3a19c; border-radius: 4px; background: #fff; overflow: hidden; box-shadow: inset 0 1px 2px rgba(0,0,0,.12); font-size: 14.500px; line-height: 25px; color: #4c4c4c; }
.combo span { flex: 1; min-width: 0; overflow: hidden; white-space: nowrap; padding-left: 6px; letter-spacing: .1px; }
.combo em { width: 27px; flex: none; border-left: 1px solid #c6c4c0; background: linear-gradient(#fff, #eceae8); display: flex; align-items: center; justify-content: center; }
.combo em svg { width: 11px; height: 7px; color: #000; }
.c1 { width: 142px; margin-right: .5px; }
.c2 { width: 142px; margin-right: 10px; }
.c2 span { margin-right: 2px; letter-spacing: .1px; }
.c3 { width: 72px; }
.split { display: flex; width: 42px; height: 33px; border: 1px solid #a3a19c; border-radius: 5px; background: linear-gradient(#e4e3e1, #f6f6f5); flex: none; }
.split b { width: 30px; height: 31px; }
.split u { width: 10px; height: 31px; border-left: 1px solid #b5b3af; }
.numb { margin-left: 1px; }
.press { border: 1px solid #a3a19c; border-radius: 5px; background: linear-gradient(#e4e3e1, #f6f6f5); }
.dis { opacity: .35; filter: grayscale(1); }
.l > svg { transform: scaleX(-1); }
.d > svg { transform: rotate(90deg); }
.up > svg { transform: rotate(-90deg); }
.tl { stroke: #4c4d4b; stroke-width: 2.800; stroke-linecap: round; fill: none; }

.g-abc { font: bold 11px "Noto Sans", sans-serif; fill: #2f3436; }
.g-t { font: bold 20px "DejaVu Serif", serif; fill: #3c3f3b; text-anchor: middle; }
.g-hash { font: 13px "DejaVu Sans", sans-serif; fill: #204a87; text-anchor: middle; }
.g-om { font: bold 27px "Liberation Serif", serif; fill: #2e3436; text-anchor: middle; }
.g-a { font: bold 23px "DejaVu Serif", serif; fill: #70726f; stroke: #2f3130; stroke-width: .9px; text-anchor: middle; }
.g-a.sm { font-size: 21px; }
.g-a.it { font-style: italic; }
.g-a.bl { fill: #8db0dd; stroke: #204a87; }
.g-b { font: bold 16px "DejaVu Sans", sans-serif; fill: #7fa9de; stroke: #204a87; stroke-width: .8px; text-anchor: middle; }
.g-n { font: bold 10px "DejaVu Sans", sans-serif; fill: #2c5ca6; text-anchor: middle; }
.g-h2 { font: bold 11px "DejaVu Sans", sans-serif; fill: #3465a4; text-anchor: middle; }

.work { flex: 1; display: flex; min-height: 0; padding-bottom: 1px; }
.canvas { width: 1799px; flex: none; position: relative; overflow: hidden; padding-left: 501px; height: 863px; }
.corner { position: absolute; left: 8px; top: 9px; width: 7px; height: 6px; border-left: 2px solid #908f8b; border-bottom: 2px solid #908f8b; }
.ruler { margin-top: 1px; }
.rl { font: 10px "Noto Sans", sans-serif; fill: #9b9a96; text-anchor: middle; }
.page { width: 796px; height: 900px; margin-top: 20px; background: #fff; border: 1px solid #bdbcba; box-shadow: 1px 1px 5px rgba(0,0,0,.3); padding: 64px 62px 0 63px; }
.marks { display: flex; justify-content: space-between; height: 13.400px; }
.marks i { width: 14px; height: 14px; border-bottom: 1px solid #c4c4c4; border-right: 1px solid #c4c4c4; }
.marks i + i { border-right: 0; border-left: 1px solid #c4c4c4; }
.text { padding: 0 13px 0 14px; font: 16px/18.4px "Liberation Serif", serif; color: #000; white-space: nowrap; }
.text p { margin: 0; min-height: 18.4px; }
.center { text-align: center; }
.text ins { text-underline-offset: 2px; }
.li { padding-left: 48px; display: block; position: relative; }
.li::before { content: "•"; position: absolute; left: 24px; }
.li.a { padding-left: 47px; }
.li.a::before { left: 23px; }
.li.c { padding-left: 71px; }
.li.c::before { left: 47px; }
.li.d { padding-left: 72px; }
.li.d::before { left: 48px; }

.scroll { width: 7px; padding-top: 2px; }
.scroll i { display: block; height: 621px; background: #f29069; }
.splitter { width: 7px; height: 862px; border: 1px solid #b3b2ae; border-right-color: #a9a8a4; background: #f6f6f5; display: flex; align-items: center; box-shadow: inset 1px 0 #fff; }
.splitter i { flex: none; width: 7px; height: 73px; margin-left: -1px; background: #969590; display: flex; align-items: center; padding-left: 1px; }
.side { flex: 1; height: 862px; border-top: 1px solid #b3b2ae; border-bottom: 1px solid #b3b2ae; border-left: 1px solid #fff; display: flex; flex-direction: column; align-items: center; padding-right: 1px; }
.smenu { width: 10px; height: 10px; margin: 15px 0 13px; }
.rule { width: 22px; height: 1px; margin-bottom: 3px; background: #dcdbd9; }
.sb { width: 32px; height: 32px; flex: none; display: flex; align-items: center; justify-content: center; }
.sb svg { width: 23px; height: 23px; }
.act1 { border: 1px solid #bcbbb8; border-radius: 4px; }
.s2 { margin-top: 3px; } .s3 { margin-top: 4px; } .s4 { margin-top: 1px; } .s5 { margin-top: 4px; }

.status { height: 21px; flex: none; border-top: 1px solid #b3b2ae; display: grid; grid-template-columns: 261px 379px 277px 271px 68px 29px 29px 29px 243px 76px 143px 1fr; align-items: center; font-size: 12px; }
.status span { height: 16px; line-height: 17px; border-right: 1px solid #9a9995; padding-left: 8px; white-space: nowrap; letter-spacing: -.05px; }
.status span:first-child { padding-left: 10px; }
.status span:last-child { border: 0; padding-left: 8px; }
.status .mid { padding-left: 0; display: flex; align-items: center; justify-content: center; }
.status .lang, .status .lvl { padding-left: 2px; }
```
